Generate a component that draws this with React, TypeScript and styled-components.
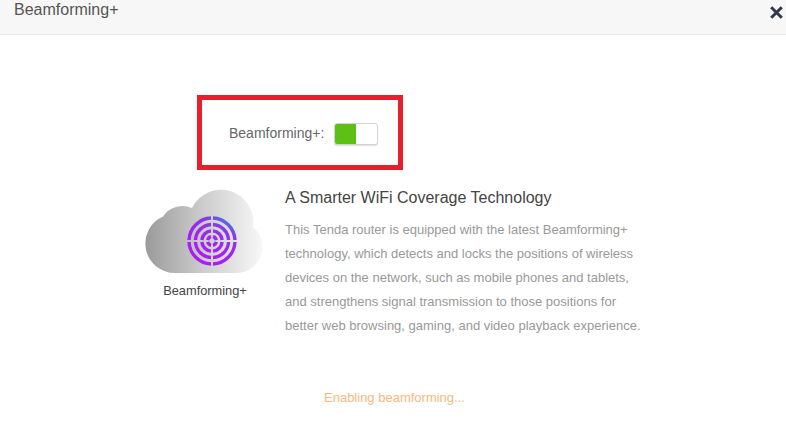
import styled, { createGlobalStyle } from 'styled-components';

const GlobalStyle = createGlobalStyle`
  html, body {
    margin: 0;
    padding: 0;
    background: #fff;
  }
  body {
    width: 786px;
    height: 439px;
    overflow: hidden;
    font-family: "Liberation Sans", Arial, sans-serif;
  }
`;

const Dialog = styled.div`
  width: 786px;
  height: 439px;
  display: flex;
  flex-direction: column;
`;

const Header = styled.header`
  height: 34px;
  box-sizing: content-box;
  border-bottom: 1px solid #e8e8e8;
  background: #f7f7f7;
  display: flex;
  justify-content: space-between;
  padding: 0 3px 0 14px;
`;

const Title = styled.h1`
  margin: 0;
  font-size: 16px;
  font-weight: 400;
  line-height: 20px;
  color: #555;
`;

const CloseButton = styled.button`
  border: 0;
  padding: 0;
  margin-top: 6px;
  width: 13px;
  height: 13px;
  background: none;
  display: block;
`;

const Body = styled.main`
  display: flex;
  flex-direction: column;
  padding: 60px 0 0 145px;
`;

const SwitchBox = styled.section`
  width: 206px;
  height: 75px;
  box-sizing: border-box;
  margin-left: 52px;
  border: 5px solid #e71f2c;
  display: flex;
  align-items: center;
  gap: 10px;
  padding: 2px 0 0 27px;
`;

const SwitchLabel = styled.span`
  font-size: 14px;
  line-height: 16px;
  margin-top: -2px;
  color: #666;
`;

const Toggle = styled.div`
  width: 44px;
  height: 22px;
  box-sizing: border-box;
  border: 1px solid #d4d4d4;
  border-radius: 3px;
  background: #fff;
  overflow: hidden;
  box-shadow: 0 1px 1px rgba(0, 0, 0, 0.12);
`;

const ToggleFill = styled.div`
  width: 21px;
  height: 100%;
  background: #5ec015;
`;

const Feature = styled.section`
  display: flex;
  margin-top: 19px;
`;

const Badge = styled.figure`
  width: 120px;
  margin: 0 20px 0 0;
  flex: none;
  display: flex;
  flex-direction: column;
  align-items: center;
`;

const BadgeCaption = styled.figcaption`
  margin-top: 9px;
  font-size: 12.8px;
  line-height: 16px;
  color: #444;
  white-space: nowrap;
`;

const Copy = styled.div`
  width: 370px;
`;

const Heading = styled.h2`
  margin: 0;
  font-size: 16px;
  font-weight: 400;
  line-height: 18px;
  color: #444;
`;

const Paragraph = styled.div`
  margin-top: 11px;
  font-size: 13px;
  line-height: 24px;
  color: #999;
`;

const Line = styled.div`
  white-space: nowrap;
`;

const Status = styled.p`
  margin: 52px 0 0 179px;
  width: 140px;
  text-align: center;
  font-size: 13px;
  line-height: 16px;
  color: #f8b87f;
  white-space: nowrap;
`;

const RADII = [23, 16.6, 10.2, 4.4];

function polar(r: number, deg: number, cx: number, cy: number) {
  const a = (deg * Math.PI) / 180;
  return `${(cx + r * Math.cos(a)).toFixed(2)} ${(cy + r * Math.sin(a)).toFixed(2)}`;
}

function quarterArcs(cx: number, cy: number) {
  const paths: string[] = [];
  RADII.forEach(r => {
    const gap = (1 / r) * (180 / Math.PI);
    [0, 90, 180, 270].forEach(start => {
      paths.push(
        `M${polar(r, start + gap, cx, cy)}A${r} ${r} 0 0 1 ${polar(r, start + 90 - gap, cx, cy)}`
      );
    });
  });
  return paths;
}

function CloudLogo() {
  return (
    <svg width="120" height="85" viewBox="0 0 120 85">
      <defs>
        <linearGradient id="cloud" gradientUnits="userSpaceOnUse" x1="0" y1="0" x2="118" y2="0">
          <stop offset="0" stopColor="#9a9a9a" />
          <stop offset="0.5" stopColor="#cdcdcd" />
          <stop offset="1" stopColor="#f8f8f8" />
        </linearGradient>
        <linearGradient id="rings" gradientUnits="userSpaceOnUse" x1="84" y1="30" x2="64" y2="60">
          <stop offset="0" stopColor="#3b7fe6" />
          <stop offset="0.35" stopColor="#8c35ea" />
          <stop offset="1" stopColor="#a81ff0" />
        </linearGradient>
      </defs>
      <path
        fill="url(#cloud)"
        d="M30 84A29.500 29.500 0 0 1 18 27.500A24 24 0 0 1 47 19A32.300 32.300 0 0 1 108 38A26 26 0 0 1 92 84Z"
      />
      <g fill="none" stroke="url(#rings)" strokeWidth="3.4">
        {quarterArcs(67, 52).map(d => (
          <path key={d} d={d} />
        ))}
      </g>
    </svg>
  );
}

export default function App() {
  return (
    <>
      <GlobalStyle />
      <Dialog>
        <Header>
          <Title>Beamforming+</Title>
          <CloseButton aria-label="Close">
            <svg width="13" height="13" viewBox="0 0 13 13" style={{ display: 'block' }}>
              <path d="M1.200 1.200L11.800 11.800M11.800 1.200L1.200 11.800" stroke="#333a45" strokeWidth="3" />
            </svg>
          </CloseButton>
        </Header>
        <Body>
          <SwitchBox>
            <SwitchLabel>Beamforming+:</SwitchLabel>
            <Toggle>
              <ToggleFill />
            </Toggle>
          </SwitchBox>
          <Feature>
            <Badge>
              <CloudLogo />
              <BadgeCaption>Beamforming+</BadgeCaption>
            </Badge>
            <Copy>
              <Heading>A Smarter WiFi Coverage Technology</Heading>
              <Paragraph>
                <Line>This Tenda router is equipped with the latest Beamforming+</Line>
                <Line>technology, which detects and locks the positions of wireless</Line>
                <Line>devices on the network, such as mobile phones and tablets,</Line>
                <Line>and strengthens signal transmission to those positions for</Line>
                <Line>better web browsing, gaming, and video playback experience.</Line>
              </Paragraph>
            </Copy>
          </Feature>
          <Status>Enabling beamforming...</Status>
        </Body>
      </Dialog>
    </>
  );
}
